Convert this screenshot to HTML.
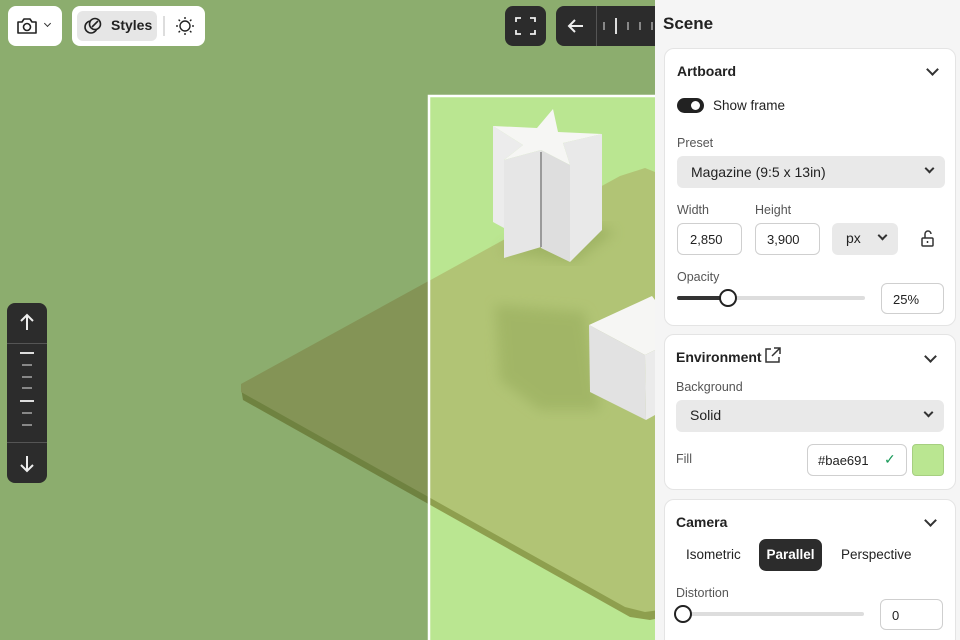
<!DOCTYPE html>
<html><head><meta charset="utf-8"><style>
*{box-sizing:border-box;margin:0;padding:0}
html,body{width:960px;height:640px;overflow:hidden}
body{position:relative;font-family:"Liberation Sans",sans-serif;background:#8cad6e;color:#222}
.abs{position:absolute}
.pill{position:absolute;background:#fff;border-radius:8px}
.dark{position:absolute;background:#2c2c2c;border-radius:8px}
.panel{position:absolute;left:655px;top:0;width:305px;height:640px;background:#f5f5f5;overflow:hidden}
.card{position:absolute;left:9px;width:292px;background:#fff;border:1px solid #e4e4e4;border-radius:10px}
.h{position:absolute;font-size:14px;font-weight:bold;color:#222}
.lbl{position:absolute;font-size:12.5px;color:#555}
.sel{position:absolute;background:#e9e9e9;border-radius:6px;font-size:14px;color:#222}
.inp{position:absolute;background:#fff;border:1px solid #cfcfcf;border-radius:6px;font-size:13px;color:#222}
.chev{position:absolute;width:9px;height:9px;border-right:2px solid #333;border-bottom:2px solid #333;transform:rotate(45deg)}
</style></head><body>
<svg class="abs" style="left:0;top:0" width="655" height="640">
<defs><clipPath id="fr"><rect x="429" y="96" width="230" height="544"/></clipPath>
<filter id="bl"><feGaussianBlur stdDeviation="6"/></filter></defs>
<polygon points="243,400 630,617 650,620 660,618 660,180 645,170 620,178 241,388" fill="#6f8240"/>
<polygon points="241,392 625,607 645,612 660,610 660,174 645,168 620,176 241,384" fill="#849456"/>
<rect x="429" y="96" width="230" height="544" fill="#bae691"/>
<g clip-path="url(#fr)">
<polygon points="243,400 630,617 650,620 660,618 660,180 645,170 620,178 241,388" fill="#8e9f4e"/>
<polygon points="241,392 625,607 645,612 660,610 660,174 645,168 620,176 241,384" fill="#b1c475"/>
<polygon points="495,305 585,312 600,410 540,410 500,380" fill="#9bb060" opacity=".7" filter="url(#bl)"/>
<polygon points="500,252 575,262 615,232 598,225 505,246" fill="#9bb060" opacity=".8" filter="url(#bl)"/>
</g>
<rect x="429" y="96" width="240" height="560" fill="none" stroke="#fff" stroke-width="2.5"/>
<!-- star -->
<polygon points="493,126 493,222 504,228 504,160 523,145" fill="#ececec"/>
<polygon points="504,160 504,258 541,247 541,150" fill="#e6e6e6"/>
<polygon points="541,150 541,248 570,262 570,165" fill="#dedede"/>
<polygon points="570,165 570,262 602,230 602,134 563,143" fill="#e9e9e9"/>
<line x1="541" y1="152" x2="541" y2="247" stroke="#9a9a9a" stroke-width="2"/>
<polygon points="553,109 558,132 602,134 563,143 570,165 541,150 504,160 523,145 493,126 537,128" fill="#f6f6f4"/>
<!-- cube -->
<polygon points="652,296 589,325 645,355 655,350 655,300" fill="#f6f6f4"/>
<polygon points="589,325 645,355 646,420 590,392" fill="#e2e2e2"/>
<polygon points="645,355 655,350 655,415 646,420" fill="#ebebeb"/>
</svg>

<div class="pill" style="left:8px;top:6px;width:54px;height:40px">
<svg class="abs" style="left:8px;top:10px" width="22" height="20" viewBox="0 0 22 20"><path d="M2 6h4l2-3h6l2 3h4v11H2z" fill="none" stroke="#222" stroke-width="1.6" stroke-linejoin="round"/><circle cx="11" cy="11" r="3.5" fill="none" stroke="#222" stroke-width="1.6"/></svg>
<div class="chev" style="left:37px;top:15px;width:5px;height:5px;border-width:1.5px"></div></div>
<div class="pill" style="left:72px;top:6px;width:133px;height:40px">
<div class="abs" style="left:5px;top:5px;width:80px;height:30px;background:#e6e6e6;border-radius:6px"></div>
<svg class="abs" style="left:11px;top:10px" width="20" height="20"><circle cx="8" cy="11" r="6" fill="none" stroke="#222" stroke-width="1.6"/><circle cx="12" cy="8" r="5.5" fill="#e6e6e6" stroke="#222" stroke-width="1.6"/><line x1="9" y1="11" x2="15" y2="5" stroke="#222" stroke-width="1.6"/></svg>
<div class="abs" style="left:39px;top:11px;font-size:14px;font-weight:bold">Styles</div>
<div class="abs" style="left:91px;top:10px;width:2px;height:20px;background:#ddd"></div>
<svg class="abs" style="left:103px;top:10px" width="20" height="20"><circle cx="10" cy="10" r="5" fill="none" stroke="#222" stroke-width="1.4"/><g stroke="#222" stroke-width="1.4"><line x1="10" y1="1" x2="10" y2="3"/><line x1="10" y1="17" x2="10" y2="19"/><line x1="1" y1="10" x2="3" y2="10"/><line x1="17" y1="10" x2="19" y2="10"/><line x1="3.6" y1="3.6" x2="5" y2="5"/><line x1="15" y1="15" x2="16.4" y2="16.4"/><line x1="3.6" y1="16.4" x2="5" y2="15"/><line x1="15" y1="5" x2="16.4" y2="3.6"/></g></svg>
</div>
<div class="dark" style="left:505px;top:6px;width:41px;height:40px">
<svg class="abs" style="left:10px;top:10px" width="21" height="20" fill="none" stroke="#eee" stroke-width="1.8"><path d="M1 6V2h5M15 2h5v4M20 14v4h-5M6 18H1v-4"/></svg></div>
<div class="dark" style="left:556px;top:6px;width:110px;height:40px">
<svg class="abs" style="left:10px;top:10px" width="20" height="20" fill="none" stroke="#eee" stroke-width="2"><path d="M17 10H4M9 4l-6 6 6 6"/></svg>
<div class="abs" style="left:40px;top:0;width:1px;height:40px;background:#555"></div>
<div class="abs" style="left:47px;top:16px;width:2px;height:8px;background:#888"></div>
<div class="abs" style="left:59px;top:12px;width:2px;height:16px;background:#ddd"></div>
<div class="abs" style="left:71px;top:16px;width:2px;height:8px;background:#888"></div>
<div class="abs" style="left:83px;top:16px;width:2px;height:8px;background:#888"></div>
<div class="abs" style="left:95px;top:16px;width:2px;height:8px;background:#888"></div>
</div>

<div class="dark" style="left:7px;top:303px;width:40px;height:180px">
<svg class="abs" style="left:10px;top:9px" width="20" height="20" fill="none" stroke="#eee" stroke-width="2"><path d="M10 18V3M4 9l6-6 6 6"/></svg>
<div class="abs" style="left:0;top:40px;width:40px;height:1px;background:#555"></div>
<div class="abs" style="left:13px;top:49px;width:14px;height:2px;background:#ddd"></div>
<div class="abs" style="left:15px;top:61px;width:10px;height:2px;background:#888"></div>
<div class="abs" style="left:15px;top:73px;width:10px;height:2px;background:#888"></div>
<div class="abs" style="left:15px;top:84px;width:10px;height:2px;background:#888"></div>
<div class="abs" style="left:13px;top:97px;width:14px;height:2px;background:#ddd"></div>
<div class="abs" style="left:15px;top:109px;width:10px;height:2px;background:#888"></div>
<div class="abs" style="left:15px;top:121px;width:10px;height:2px;background:#888"></div>
<div class="abs" style="left:0;top:139px;width:40px;height:1px;background:#555"></div>
<svg class="abs" style="left:10px;top:151px" width="20" height="20" fill="none" stroke="#eee" stroke-width="2"><path d="M10 2v15M4 11l6 6 6-6"/></svg>
</div>

<div class="panel">
<div class="abs" style="left:8px;top:14px;font-size:17px;font-weight:bold">Scene</div>
<div class="card" style="top:48px;height:278px">
<div class="h" style="left:12px;top:14px">Artboard</div>
<div class="chev" style="left:263px;top:16px"></div>
<div class="abs" style="left:12px;top:49px;width:27px;height:15px;background:#222;border-radius:8px"><div class="abs" style="left:14px;top:3px;width:9px;height:9px;background:#fff;border-radius:50%"></div></div>
<div class="abs" style="left:48px;top:49px;font-size:13.5px">Show frame</div>
<div class="lbl" style="left:12px;top:87px">Preset</div>
<div class="sel" style="left:12px;top:107px;width:268px;height:32px"><span class="abs" style="left:14px;top:8px">Magazine (9:5 x 13in)</span><div class="chev" style="left:249px;top:9px;width:7px;height:7px"></div></div>
<div class="lbl" style="left:12px;top:154px">Width</div>
<div class="lbl" style="left:90px;top:154px">Height</div>
<div class="inp" style="left:12px;top:174px;width:65px;height:32px"><span class="abs" style="left:12px;top:8px">2,850</span></div>
<div class="inp" style="left:90px;top:174px;width:65px;height:32px"><span class="abs" style="left:11px;top:8px">3,900</span></div>
<div class="sel" style="left:167px;top:174px;width:66px;height:32px"><span class="abs" style="left:14px;top:7px">px</span><div class="chev" style="left:47px;top:9px;width:7px;height:7px"></div></div>
<svg class="abs" style="left:255px;top:180px" width="16" height="20" fill="none" stroke="#333" stroke-width="1.5"><rect x="2" y="9" width="11" height="8" rx="1"/><path d="M5 9V5a3 3 0 0 1 6 0"/><line x1="7.5" y1="12" x2="7.5" y2="14"/></svg>
<div class="lbl" style="left:12px;top:221px">Opacity</div>
<div class="abs" style="left:12px;top:247px;width:188px;height:4px;background:#ddd;border-radius:2px"></div>
<div class="abs" style="left:12px;top:247px;width:50px;height:4px;background:#333;border-radius:2px"></div>
<div class="abs" style="left:54px;top:240px;width:18px;height:18px;background:#fff;border:2px solid #222;border-radius:50%"></div>
<div class="inp" style="left:216px;top:234px;width:63px;height:31px"><span class="abs" style="left:11px;top:8px">25%</span></div>
</div>
<div class="card" style="top:334px;height:156px">
<div class="h" style="left:11px;top:14px">Environment</div>
<svg class="abs" style="left:99px;top:11px" width="18" height="18" fill="none" stroke="#333" stroke-width="1.5"><path d="M7 3H2v13h13v-5M10 2h6v6M16 2l-8 8"/></svg>
<div class="chev" style="left:261px;top:17px"></div>
<div class="lbl" style="left:11px;top:45px">Background</div>
<div class="sel" style="left:11px;top:65px;width:268px;height:32px"><span class="abs" style="left:14px;top:7px">Solid</span><div class="chev" style="left:249px;top:9px;width:7px;height:7px"></div></div>
<div class="lbl" style="left:11px;top:117px">Fill</div>
<div class="inp" style="left:142px;top:109px;width:100px;height:32px"><span class="abs" style="left:10px;top:8px">#bae691</span><span class="abs" style="left:76px;top:6px;color:#1a9a5a;font-size:14px">✓</span></div>
<div class="abs" style="left:247px;top:109px;width:32px;height:32px;background:#bae691;border:1px solid #a6cf80;border-radius:4px"></div>
</div>
<div class="card" style="top:499px;height:150px">
<div class="h" style="left:11px;top:14px">Camera</div>
<div class="chev" style="left:261px;top:16px"></div>
<div class="abs" style="left:21px;top:47px;font-size:13.5px">Isometric</div>
<div class="abs" style="left:94px;top:39px;width:63px;height:32px;background:#2c2c2c;border-radius:7px;color:#fff;font-size:13.5px;font-weight:bold;text-align:center;line-height:32px">Parallel</div>
<div class="abs" style="left:176px;top:47px;font-size:13.5px">Perspective</div>
<div class="lbl" style="left:11px;top:86px">Distortion</div>
<div class="abs" style="left:11px;top:112px;width:188px;height:4px;background:#ddd;border-radius:2px"></div>
<div class="abs" style="left:9px;top:105px;width:18px;height:18px;background:#fff;border:2px solid #222;border-radius:50%"></div>
<div class="inp" style="left:215px;top:99px;width:63px;height:31px"><span class="abs" style="left:11px;top:8px">0</span></div>
</div>
</div>
</body></html>
